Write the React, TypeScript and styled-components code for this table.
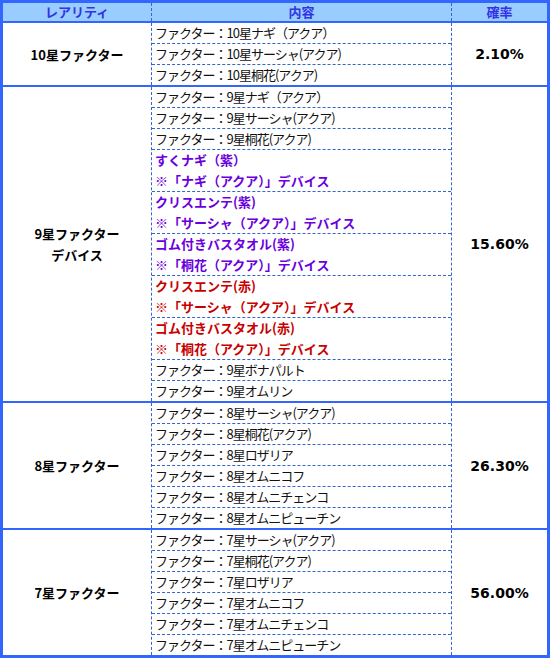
import React from "react";
import styled, { createGlobalStyle } from "styled-components";

type Tone = "normal" | "purple" | "red";

interface Item {
  lines: string[];
  tone?: Tone;
}

interface Group {
  label: string[];
  rate: string;
  items: Item[];
}

const f = (s: string): Item => ({ lines: [`ファクター：${s}`] });

const groups: Group[] = [
  {
    label: ["10星ファクター"],
    rate: "2.10%",
    items: [f("10星ナギ（アクア）"), f("10星サーシャ(アクア)"), f("10星桐花(アクア)")],
  },
  {
    label: ["9星ファクター", "デバイス"],
    rate: "15.60%",
    items: [
      f("9星ナギ（アクア）"),
      f("9星サーシャ(アクア)"),
      f("9星桐花(アクア)"),
      { lines: ["すくナギ（紫）", "※「ナギ（アクア）」デバイス"], tone: "purple" },
      { lines: ["クリスエンテ(紫)", "※「サーシャ（アクア）」デバイス"], tone: "purple" },
      { lines: ["ゴム付きバスタオル(紫)", "※「桐花（アクア）」デバイス"], tone: "purple" },
      { lines: ["クリスエンテ(赤)", "※「サーシャ（アクア）」デバイス"], tone: "red" },
      { lines: ["ゴム付きバスタオル(赤)", "※「桐花（アクア）」デバイス"], tone: "red" },
      f("9星ボナパルト"),
      f("9星オムリン"),
    ],
  },
  {
    label: ["8星ファクター"],
    rate: "26.30%",
    items: [
      f("8星サーシャ(アクア)"),
      f("8星桐花(アクア)"),
      f("8星ロザリア"),
      f("8星オムニコフ"),
      f("8星オムニチェンコ"),
      f("8星オムニピューチン"),
    ],
  },
  {
    label: ["7星ファクター"],
    rate: "56.00%",
    items: [
      f("7星サーシャ(アクア)"),
      f("7星桐花(アクア)"),
      f("7星ロザリア"),
      f("7星オムニコフ"),
      f("7星オムニチェンコ"),
      f("7星オムニピューチン"),
    ],
  },
];

const App = () => {
  return (
    <>
      <GlobalStyle />
      <Table>
        <HeaderRow>
          <HeadCell $w={148}>レアリティ</HeadCell>
          <HeadCell $w={299}>内容</HeadCell>
          <HeadCell>確率</HeadCell>
        </HeaderRow>
        {groups.map((g) => (
          <GroupRow key={g.rate}>
            <LabelCell>
              {g.label.map((l) => (
                <div key={l}>{l}</div>
              ))}
            </LabelCell>
            <ItemList>
              {g.items.map((it, i) => (
                <ItemCell key={i} $tone={it.tone ?? "normal"} $double={it.lines.length > 1}>
                  {it.lines.map((l) => (
                    <div key={l}>{l}</div>
                  ))}
                </ItemCell>
              ))}
            </ItemList>
            <RateCell>{g.rate}</RateCell>
          </GroupRow>
        ))}
      </Table>
    </>
  );
};
export default App;

const GlobalStyle = createGlobalStyle`
  body {
    margin: 0;
    background: #fff;
    font-family: "Noto Sans CJK JP", "Noto Sans", sans-serif;
  }
`;

const blue = "#3366ff";
const dash = "1px dashed #3366cc";

const Table = styled.div`
  width: 550px;
  height: 658px;
  box-sizing: border-box;
  border: 3px solid ${blue};
  display: flex;
  flex-direction: column;
`;

const HeaderRow = styled.div`
  display: flex;
  height: 18px;
  background: #99ccff;
  border-bottom: 2px solid ${blue};
`;

const HeadCell = styled.div<{ $w?: number }>`
  width: ${(p) => (p.$w ? `${p.$w}px` : "auto")};
  flex: ${(p) => (p.$w ? "none" : "1")};
  border-right: ${(p) => (p.$w ? dash : "none")};
  text-align: center;
  font-size: 13px;
  line-height: 18px;
  font-weight: 700;
  color: #3333e6;
`;

const GroupRow = styled.div`
  display: flex;
  & + & {
    border-top: 2px solid ${blue};
  }
`;

const LabelCell = styled.div`
  width: 148px;
  flex: none;
  border-right: ${dash};
  display: flex;
  flex-direction: column;
  align-items: center;
  justify-content: center;
  font-size: 13px;
  line-height: 21px;
  font-weight: 700;
  color: #000;
`;

const ItemList = styled.div`
  width: 299px;
  flex: none;
  border-right: ${dash};
  display: flex;
  flex-direction: column;
`;

const toneColor: Record<Tone, string> = {
  normal: "#111",
  purple: "#6a00dd",
  red: "#c80000",
};

const ItemCell = styled.div<{ $tone: Tone; $double: boolean }>`
  height: ${(p) => (p.$double ? "41px" : "20px")};
  line-height: ${(p) => (p.$double ? "20.5px" : "20px")};
  padding-left: 3px;
  font-size: 13px;
  letter-spacing: ${(p) => (p.$tone === "normal" ? "-1px" : "0")};
  white-space: nowrap;
  color: ${(p) => toneColor[p.$tone]};
  font-weight: ${(p) => (p.$tone === "normal" ? 400 : 700)};
  &:not(:last-child) {
    border-bottom: ${dash};
  }
`;

const RateCell = styled.div`
  flex: 1;
  display: flex;
  align-items: center;
  justify-content: center;
  font-family: "DejaVu Sans", sans-serif;
  font-size: 14px;
  font-weight: 700;
  color: #000;
`;
